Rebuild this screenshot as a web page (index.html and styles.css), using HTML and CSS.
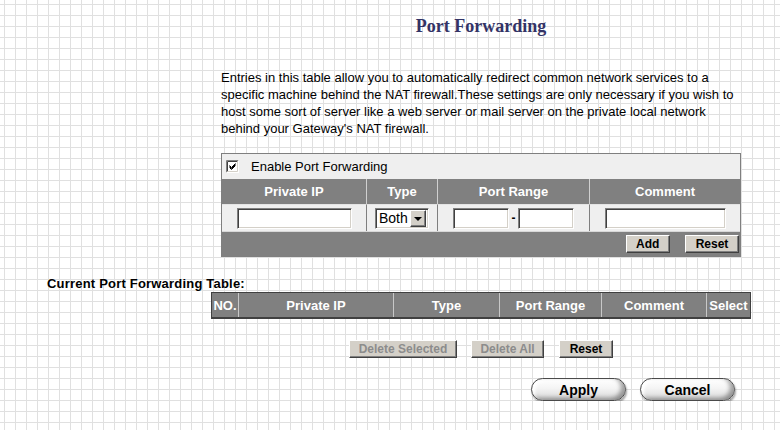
FILE: index.html
```html
<!DOCTYPE html>
<html lang="en">
<head>
    <meta charset="UTF-8">
    <title>Port Forwarding</title>
    <link rel="stylesheet" href="styles.css">
</head>
<body>
    <div class="top">
        <h1 class="title">Port Forwarding</h1>
        <p class="intro">
            Entries in this table allow you to automatically redirect common network services to a<br>
            specific machine behind the NAT firewall.These settings are only necessary if you wish to<br>
            host some sort of server like a web server or mail server on the private local network<br>
            behind your Gateway's NAT firewall.
        </p>

        <table class="pf-form">
            <colgroup>
                <col style="width:144px">
                <col style="width:71px">
                <col style="width:152px">
                <col style="width:151px">
            </colgroup>
            <tr class="enable-row">
                <td colspan="4">
                    <label class="enable">
                        <svg class="check" width="13" height="13" viewBox="0 0 13 13">
                            <rect x="0" y="0" width="13" height="13" fill="#ffffff"/>
                            <path d="M0.5 12.5V0.5H12.5" fill="none" stroke="#808080"/>
                            <path d="M1.5 11.5V1.5H11.5" fill="none" stroke="#404040"/>
                            <path d="M0.5 12.5H12.5V0.5" fill="none" stroke="#ffffff"/>
                            <path d="M1.5 11.5H11.5V1.5" fill="none" stroke="#d4d0c8"/>
                            <path d="M3.5 5.5L5.5 7.5L9.5 3.5M3.5 6.5L5.5 8.5L9.5 4.5M3.5 7.5L5.5 9.5L9.5 5.5" fill="none" stroke="#000" stroke-width="1"/>
                        </svg>
                        Enable Port Forwarding
                    </label>
                </td>
            </tr>
            <tr class="head-row">
                <th>Private IP</th>
                <th>Type</th>
                <th>Port Range</th>
                <th>Comment</th>
            </tr>
            <tr class="input-row">
                <td><input type="text" class="txt ip-field"></td>
                <td>
                    <div class="select">
                        <span class="select-value">Both</span>
                        <span class="select-btn"><span class="arrow"></span></span>
                    </div>
                </td>
                <td>
                    <div class="range">
                        <input type="text" class="txt port-field">
                        <span class="dash">-</span>
                        <input type="text" class="txt port-field">
                    </div>
                </td>
                <td><input type="text" class="txt comment-field"></td>
            </tr>
            <tr class="action-row">
                <td colspan="4">
                    <button class="btn btn-add">Add</button>
                    <button class="btn btn-reset">Reset</button>
                </td>
            </tr>
        </table>
    </div>

    <div class="list-label">Current Port Forwarding Table:</div>
    <table class="pf-list">
        <colgroup>
            <col style="width:26px">
            <col style="width:155px">
            <col style="width:106px">
            <col style="width:102px">
            <col style="width:105px">
            <col style="width:44px">
        </colgroup>
        <tr>
            <th>NO.</th>
            <th>Private IP</th>
            <th>Type</th>
            <th>Port Range</th>
            <th>Comment</th>
            <th>Select</th>
        </tr>
    </table>

    <div class="list-actions">
        <button class="btn btn-del-sel" disabled>Delete Selected</button>
        <button class="btn btn-del-all" disabled>Delete All</button>
        <button class="btn btn-reset">Reset</button>
    </div>

    <div class="page-actions">
        <button class="pill">Apply</button>
        <button class="pill">Cancel</button>
    </div>
</body>
</html>
```

FILE: styles.css
```css
* {
    box-sizing: border-box;
}
body {
    margin: 0;
    font-family: "Liberation Sans", Arial, sans-serif;
    font-size: 12px;
    color: #000;
    background-color: #fff;
    background-image:
        linear-gradient(to right, #e0e0e0 1px, transparent 1px),
        linear-gradient(to bottom, #e0e0e0 1px, transparent 1px);
    background-size: 11px 11px;
    background-position: 4px 4px;
}
.top {
    margin-left: 221px;
    width: 520px;
}
.title {
    margin: 0;
    padding-top: 15px;
    font: bold 18px/22px "Liberation Serif", "Times New Roman", serif;
    color: #333366;
    text-align: center;
}
.intro {
    margin: 32px 0 0;
    font-size: 13px;
    line-height: 17px;
    white-space: nowrap;
}

/* form table */
.pf-form {
    margin-top: 16px;
    width: 520px;
    table-layout: fixed;
    border-collapse: separate;
    border-spacing: 0;
    border: 1px solid #7f7f7f;
}
.pf-form td, .pf-form th {
    padding: 0;
}
.enable-row td {
    height: 25px;
    background-color: #efefef;
    padding-left: 4px;
}
.enable {
    display: flex;
    align-items: center;
    gap: 12px;
    font-size: 13px;
}
.check {
    display: block;
}
.head-row th {
    height: 25px;
    background-color: #808080;
    color: #fff;
    font-size: 13px;
    font-weight: bold;
    text-align: center;
}
.head-row th + th {
    border-left: 1px solid #d0d0d0;
}
.input-row td {
    height: 27px;
    background-color: #efefef;
    border-top: 1px solid #e4e4e4;
    text-align: center;
}
.input-row td + td {
    border-left: 1px solid #7f7f7f;
}
.txt {
    height: 21px;
    margin: 0;
    padding: 0 2px;
    background: #fff;
    border: 1px solid;
    border-color: #808080 #ffffff #ffffff #808080;
    box-shadow: inset 1px 1px 0 #404040, inset -1px -1px 0 #d4d0c8;
    vertical-align: middle;
    font: 13px "Liberation Sans", Arial, sans-serif;
}
.ip-field {
    width: 115px;
}
.comment-field {
    width: 121px;
}
.range {
    display: flex;
    justify-content: center;
    align-items: center;
}
.port-field {
    width: 56px;
}
.dash {
    width: 9px;
    text-align: center;
    font-weight: bold;
}
.select {
    display: inline-flex;
    align-items: center;
    justify-content: space-between;
    width: 54px;
    height: 21px;
    vertical-align: middle;
    background: #fff;
    border: 1px solid;
    border-color: #808080 #ffffff #ffffff #808080;
    box-shadow: inset 1px 1px 0 #404040, inset -1px -1px 0 #d4d0c8;
    padding: 2px;
    text-align: left;
}
.select-value {
    font-size: 14px;
    padding-left: 1px;
}
.select-btn {
    display: flex;
    align-items: center;
    justify-content: center;
    width: 16px;
    height: 17px;
    background: #d4d0c8;
    border: 1px solid;
    border-color: #ffffff #404040 #404040 #ffffff;
    box-shadow: inset -1px -1px 0 #808080;
}
.arrow {
    width: 0;
    height: 0;
    border-left: 4px solid transparent;
    border-right: 4px solid transparent;
    border-top: 4px solid #000;
    margin-top: 1px;
}
.action-row td {
    height: 25px;
    background-color: #808080;
    border-top: 1px solid #d8d8d8;
    text-align: right;
    padding-right: 1px;
}

/* buttons */
.btn {
    height: 18px;
    padding: 0;
    margin: 0;
    font: bold 12px "Liberation Sans", Arial, sans-serif;
    color: #000;
    background-color: #d4d0c8;
    border: 1px solid;
    border-color: #ffffff #404040 #404040 #ffffff;
    box-shadow: inset -1px -1px 0 #808080;
    vertical-align: middle;
}
.btn:disabled {
    color: #8c8c8c;
}
.btn-add {
    width: 44px;
    margin-right: 12px;
}
.btn-reset {
    width: 54px;
}
.btn-del-sel {
    width: 108px;
}
.btn-del-all {
    width: 73px;
}

/* current table */
.list-label {
    margin: 19px 0 0 47px;
    font-size: 13px;
    font-weight: bold;
    line-height: 16px;
    letter-spacing: 0.2px;
}
.pf-list {
    margin-left: 211px;
    width: 540px;
    table-layout: fixed;
    border-collapse: separate;
    border-spacing: 0;
    border: 1px solid #404040;
    border-bottom-width: 2px;
}
.pf-list th {
    height: 24px;
    padding: 0;
    background-color: #808080;
    color: #fff;
    font-size: 13px;
    font-weight: bold;
    text-align: center;
    white-space: nowrap;
}
.pf-list th + th {
    border-left: 1px solid #c8c8c8;
}
.list-actions {
    margin: 21px 0 0 211px;
    width: 540px;
    display: flex;
    justify-content: center;
    gap: 14px;
}
.list-actions .btn-del-all {
    margin-right: 1px;
}
.page-actions {
    margin: 20px 0 0 531px;
    display: flex;
    gap: 14px;
}
.pill {
    width: 95px;
    height: 23px;
    padding: 0;
    font: bold 14px "Liberation Sans", Arial, sans-serif;
    color: #000;
    border: 1px solid #4a4a4a;
    border-radius: 12px;
    background: linear-gradient(to bottom, #ffffff 0%, #f4f4f4 45%, #d6d6d6 100%);
    box-shadow: inset -4px -2px 4px rgba(0, 0, 0, 0.35), inset 3px 2px 3px #ffffff, 1px 2px 2px rgba(0, 0, 0, 0.35);
}
```
